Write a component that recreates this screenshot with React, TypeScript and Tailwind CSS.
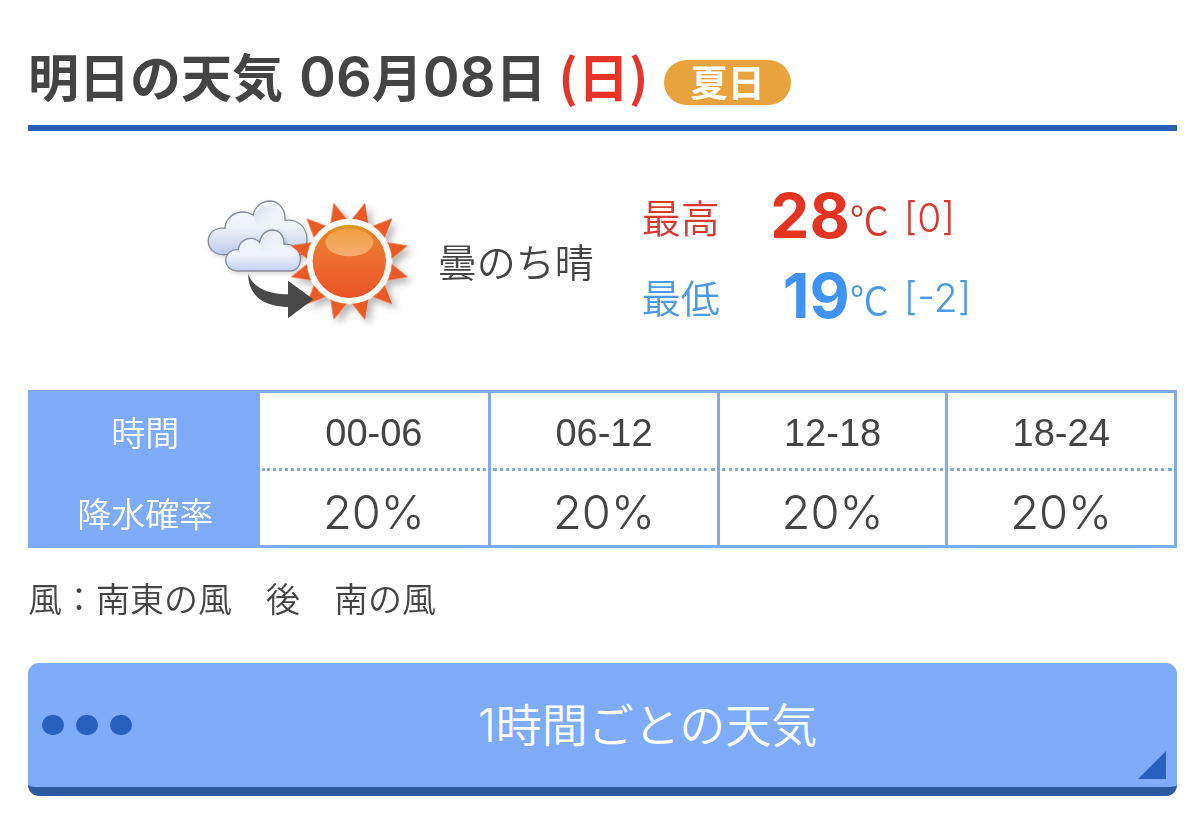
import React from "react";

const periods = [
  { time: "00-06", rain: "20%" },
  { time: "06-12", rain: "20%" },
  { time: "12-18", rain: "20%" },
  { time: "18-24", rain: "20%" },
];

const rayAngles = [15, 45, 75, 105, 135, 165, 195, 225, 255, 285, 315, 345];

function CloudyThenSunnyIcon() {
  return (
    <svg
      viewBox="45 17 672 420"
      className="h-[140px] w-[224px] shrink-0"
      role="img"
      aria-label="曇のち晴"
    >
      <defs>
        <linearGradient id="sunFill" x1="0" y1="0" x2="0" y2="1">
          <stop offset="0" stopColor="#d3a01c" />
          <stop offset="0.12" stopColor="#e9802a" />
          <stop offset="0.5" stopColor="#ee6c2e" />
          <stop offset="1" stopColor="#ea5427" />
        </linearGradient>
        <linearGradient id="sunShine" x1="0" y1="0" x2="0" y2="1">
          <stop offset="0" stopColor="#f0a040" />
          <stop offset="1" stopColor="#f5ac72" />
        </linearGradient>
        <linearGradient id="cloudBack" x1="0" y1="0" x2="0" y2="1">
          <stop offset="0" stopColor="#f8f9fd" />
          <stop offset="0.5" stopColor="#eef1f9" />
          <stop offset="1" stopColor="#bccbeb" />
        </linearGradient>
        <linearGradient id="cloudFront" x1="0" y1="0" x2="0" y2="1">
          <stop offset="0" stopColor="#eceff8" />
          <stop offset="0.6" stopColor="#f1f4fb" />
          <stop offset="1" stopColor="#c3d1f1" />
        </linearGradient>
        <linearGradient id="puff" x1="0" y1="0" x2="1" y2="1">
          <stop offset="0" stopColor="#cdd5e6" />
          <stop offset="0.7" stopColor="#f2f4fa" stopOpacity="0" />
        </linearGradient>
        <filter id="soft" x="-20%" y="-20%" width="150%" height="150%">
          <feDropShadow dx="14" dy="14" stdDeviation="11" floodColor="#000" floodOpacity="0.28" />
        </filter>
        <filter id="cloudSoft" x="-20%" y="-20%" width="150%" height="150%">
          <feDropShadow dx="3" dy="6" stdDeviation="6" floodColor="#000" floodOpacity="0.16" />
        </filter>
      </defs>
      <g stroke="#868c9c" strokeWidth="4" filter="url(#cloudSoft)">
        <path
          fill="url(#cloudBack)"
          d="M103 223C70 225 51 205 52 180C53 155 75 140 102 144C103 112 135 88 170 97C177 99 183 102 186 105C192 78 212 62 238 62C265 64 284 88 282 120C320 115 348 140 348 178C348 200 342 212 330 223Z"
        />
        <ellipse cx="233" cy="114" rx="42" ry="38" fill="url(#puff)" stroke="none" />
      </g>
      <g stroke="#868c9c" strokeWidth="4" filter="url(#cloudSoft)">
        <path
          fill="url(#cloudFront)"
          d="M140 272C115 270 103 255 104 238C106 218 122 206 142 208C144 188 160 174 180 174C190 174 200 180 205 186C212 160 228 149 245 149C266 150 281 168 279 192C305 188 328 207 328 235C328 258 315 272 297 272Z"
        />
        <ellipse cx="243" cy="192" rx="33" ry="32" fill="url(#puff)" stroke="none" opacity="0.6" />
      </g>
      <g filter="url(#soft)">
        {rayAngles.map((angle) => (
          <path
            key={angle}
            d="M475 61L502 122L448 122Z"
            fill="#ea5a27"
            transform={`rotate(${angle} 475 243)`}
          />
        ))}
        <circle cx="475" cy="243" r="127" fill="#fffaf5" />
      </g>
      <path
        d="M171 279C182 318 228 343 291 342V301L367 357L291 414V380C215 378 172 345 171 279Z"
        fill="#484848"
      />
      <circle cx="475" cy="243" r="118" fill="none" stroke="#fffaf5" strokeWidth="18" />
      <circle cx="475" cy="243" r="110" fill="url(#sunFill)" />
      <ellipse cx="475" cy="186" rx="72" ry="42" fill="url(#sunShine)" />
    </svg>
  );
}

type TemperatureProps = {
  label: string;
  value: string;
  diff: string;
  tone: string;
  strong: string;
};

function Temperature({ label, value, diff, tone, strong }: TemperatureProps) {
  return (
    <div className={`flex h-20 items-center text-[39px] leading-[56px] font-[350] ${tone}`}>
      <dt className="w-[121px]">{label}</dt>
      <dd className="flex items-center">
        <span
          className={`w-[87px] text-right font-['Inter',sans-serif] text-[62px] font-bold leading-[80px] ${strong}`}
        >
          {value}
        </span>
        <span className="w-[54px] pt-1">℃</span>
        <span className="pt-1 font-['Inter',sans-serif]">{diff}</span>
      </dd>
    </div>
  );
}

export default function App() {
  return (
    <main
      className="bg-white pt-[30px] pr-[23px] pb-10 pl-7 font-['Noto_Sans_CJK_JP',sans-serif] text-[#444]"
      lang="ja"
    >
      <header className="flex h-[101px] items-start border-b-[6px] border-[#2a5fb8] pt-2">
        <h1 className="flex items-baseline text-[51px] font-bold leading-[74px] whitespace-nowrap">
          <span>明日の天気</span>
          <span className="ml-4 font-['Inter',sans-serif] text-[56px] font-semibold">06</span>
          <span>月</span>
          <span className="font-['Inter',sans-serif] text-[56px] font-semibold">08</span>
          <span>日</span>
          <span className="ml-3 text-[#e63528]">(日)</span>
        </h1>
        <span className="mt-[22px] ml-4 flex h-[45px] w-[127px] items-center justify-center rounded-full bg-[#e8a33f] pb-1 text-[37px] font-bold leading-[44px] text-white">
          夏日
        </span>
      </header>

      <section className="mt-[45px] flex h-40 items-center justify-center pr-[28px]">
        <CloudyThenSunnyIcon />
        <p className="ml-2 pt-2 text-[39px] font-[350] leading-[56px] whitespace-nowrap">曇のち晴</p>
        <dl className="ml-12 whitespace-nowrap">
          <Temperature label="最高" value="28" diff="[0]" tone="text-[#d63a30]" strong="text-[#e63423]" />
          <Temperature label="最低" value="19" diff="[-2]" tone="text-[#4a9ae8]" strong="text-[#4093f3]" />
        </dl>
      </section>

      <table className="mt-[54px] w-full table-fixed border-separate border-spacing-0 border-[3px] border-[#7eabf5] text-center">
        <tbody>
          <tr>
            <th
              scope="row"
              className="h-[78px] bg-[#7eabfa] p-0 text-[34px] font-[350] leading-[48px] text-white"
            >
              時間
            </th>
            {periods.map((p) => (
              <td
                key={p.time}
                className="border-l-[3px] border-[#7eabf5] p-0 align-top nth-2:border-l-0"
              >
                <div className="mx-0.5 h-[78px] border-b-[3px] border-dotted border-[#86a9e0] pt-0.5 font-['Liberation_Sans',sans-serif] text-[38px] leading-[76px]">
                  {p.time}
                </div>
              </td>
            ))}
          </tr>
          <tr>
            <th
              scope="row"
              className="h-[74px] bg-[#7eabfa] p-0 pt-2.5 text-[34px] font-[350] leading-[48px] text-white"
            >
              降水確率
            </th>
            {periods.map((p) => (
              <td
                key={p.time}
                className="border-l-[3px] border-[#7eabf5] p-0 pt-2 font-['Inter',sans-serif] text-[47px] font-[350] leading-[60px] nth-2:border-l-0"
              >
                {p.rain}
              </td>
            ))}
          </tr>
        </tbody>
      </table>

      <p className="mt-[26px] text-[34px] font-[350] leading-[48px]">風：南東の風　後　南の風</p>

      <a
        href="#hourly"
        className="relative mt-[41px] flex h-[133px] items-center rounded-[11px] border-b-[9px] border-[#2a5aa2] bg-[#7eabfa] px-[14px] text-white"
      >
        <span className="flex gap-3" aria-hidden="true">
          <span className="h-5 w-[22px] rounded-full bg-[#2860bf]" />
          <span className="h-5 w-[22px] rounded-full bg-[#2860bf]" />
          <span className="h-5 w-[22px] rounded-full bg-[#2860bf]" />
        </span>
        <span className="flex-1 text-center font-['Inter','Noto_Sans_CJK_JP',sans-serif] text-[46px] font-[350] leading-[64px]">
          1時間ごとの天気
        </span>
        <svg className="absolute right-[11px] bottom-2 h-7 w-7" viewBox="0 0 28 28" aria-hidden="true">
          <path d="M28 0V28H0Z" fill="#2860bf" />
        </svg>
      </a>
    </main>
  );
}
